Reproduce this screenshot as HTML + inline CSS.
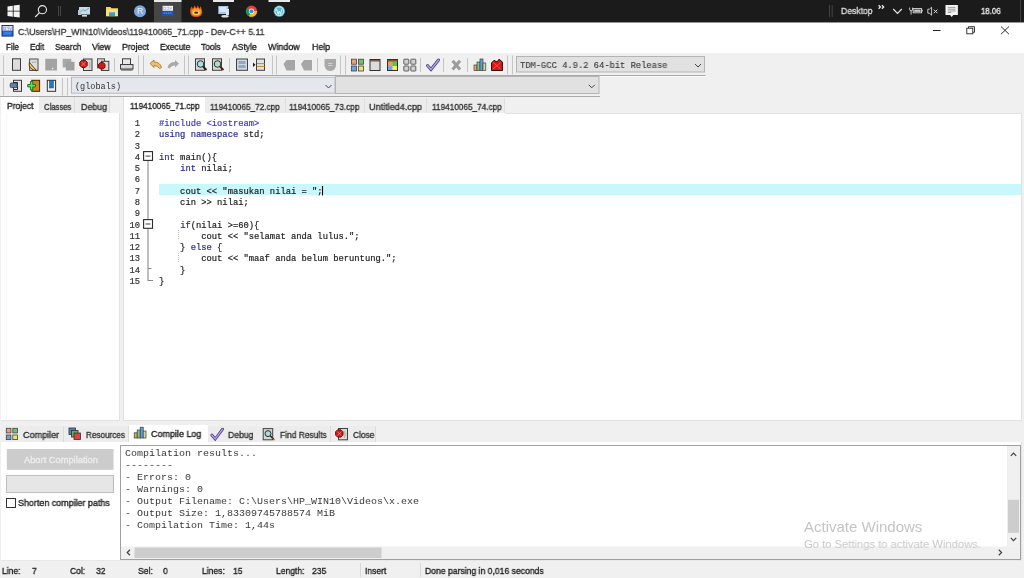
<!DOCTYPE html>
<html><head><meta charset="utf-8">
<style>
*{margin:0;padding:0;box-sizing:border-box}
html,body{width:1024px;height:578px;overflow:hidden;background:#f0f0f0;font-family:"Liberation Sans",sans-serif;color:#000}
.a{position:absolute}
.t{position:absolute;white-space:pre;line-height:1;transform-origin:0 0;will-change:transform}
.mono{font-family:"Liberation Mono",monospace;will-change:transform}
svg{position:absolute;overflow:visible}
</style></head><body>


<!-- TASKBAR -->
<div class="a" style="left:0;top:0;width:1024px;height:22px;background:#1b1b1b"></div>
<!-- taskbar icons -->
<svg style="left:0;top:0" width="1024" height="22">
  <!-- windows logo -->
  <path d="M7.5 6.4 L12.8 5.7 L12.8 10.8 L7.5 10.8 Z M13.6 5.6 L19.7 4.8 L19.7 10.8 L13.6 10.8 Z M7.5 11.6 L12.8 11.6 L12.8 16.7 L7.5 16 Z M13.6 11.6 L19.7 11.6 L19.7 17.5 L13.6 16.8 Z" fill="#f4f4f4"/>
  <!-- search -->
  <circle cx="42.4" cy="9.7" r="4.1" fill="none" stroke="#e8e8e8" stroke-width="1.1"/>
  <path d="M39.5 12.7 L35.2 17" stroke="#e8e8e8" stroke-width="1.2"/>
  <!-- separator -->
  <path d="M58.5 6 V16 M60.5 6 V16" stroke="#4a4a4a" stroke-width="0.9"/>
  <!-- monitor icon -->
  <rect x="79" y="7" width="11" height="7.5" fill="#c9dce6" rx="0.5"/>
  <path d="M80 12.5 L83 9.5 L85 11 L89 8" stroke="#6aa8c0" stroke-width="1" fill="none"/>
  <rect x="78" y="10" width="3" height="5" fill="#b8c6d0"/>
  <rect x="82" y="15" width="5" height="1.6" fill="#d8d8d8"/>
  <!-- folder -->
  <path d="M106 7 h4.5 l1 1.2 h6.5 v8 h-12 z" fill="#f2d06b"/>
  <rect x="106" y="9.5" width="12" height="6.6" fill="#f8de86"/>
  <rect x="109" y="12.3" width="6" height="3.8" fill="#3a9fc8"/>
  <!-- R -->
  <circle cx="140" cy="11.2" r="6" fill="#7aa8dc"/>
  <text x="140" y="14.3" font-size="8.5" font-family="Liberation Sans" fill="#e8f0fa" text-anchor="middle">R</text>
  <!-- active button -->
  <rect x="154" y="0" width="27.5" height="22" fill="#454545"/>
  <rect x="154" y="0" width="27.5" height="2" fill="#e8e8e8"/>
  <rect x="213" y="0" width="21" height="2" fill="#e8e8e8"/>
  <rect x="268.5" y="0" width="21.5" height="2" fill="#e8e8e8"/>
  <!-- dev icon -->
  <rect x="162" y="10.6" width="11.6" height="5.4" fill="#1d52b4"/>
  <rect x="162.6" y="5.8" width="10.4" height="5" fill="#f2f4fa"/>
  <path d="M163.6 7.2 h2 v2.4 h-2 z M166.8 7.2 h2 v2.4 h-2 M169.8 7.2 l1 2.4 l1 -2.4" stroke="#9aa8c8" stroke-width="0.6" fill="none"/>
  <path d="M163.5 13.2 h8.6" stroke="#5a90e8" stroke-width="1.2" stroke-dasharray="1.5 0.6"/>
  <!-- orange hand -->
  <path d="M190.2 9.5 L191.5 6.5 L193.2 8.8 L194.4 5.2 L196.3 8.3 L197.8 5.2 L199.2 8.6 L200.8 6.2 L201.8 9.5 L202.3 12.5 Q201.5 17 196.2 17 Q190.8 17 190.2 12.5 Z" fill="#e2521a"/>
  <path d="M191.5 10 L193.2 9.5 L194.4 7.5 L196.3 9.3 L197.8 7.5 L199.2 9.5 L200.8 9 L201 12.5 Q200.5 15.8 196.2 15.8 Q191.8 15.8 191.5 12.5 Z" fill="#f4a030"/>
  <ellipse cx="196.2" cy="12.7" rx="3.3" ry="2.1" fill="#f8d858"/>
  <ellipse cx="196.2" cy="12.7" rx="2" ry="1.1" fill="#5a1a08"/>
  <!-- monitor2 -->
  <rect x="218.3" y="6" width="10" height="8" fill="#a8c8f0"/>
  <rect x="219.3" y="7" width="7" height="5" fill="#d8e8fa"/>
  <rect x="226" y="9" width="3" height="6" fill="#dde4ec"/>
  <ellipse cx="225" cy="16.2" rx="3.8" ry="1.3" fill="#e0e0e0"/>
  <!-- chrome -->
  <circle cx="251.5" cy="11.2" r="5.6" fill="#db4437"/>
  <path d="M251.5 11.2 L246.6 8.4 A5.6 5.6 0 0 0 249 16.2 Z" fill="#0f9d58"/>
  <path d="M251.5 11.2 L249 16.2 A5.6 5.6 0 0 0 257.1 11 Z" fill="#f4c20d"/>
  <circle cx="251.5" cy="11.2" r="2.6" fill="#fff"/>
  <circle cx="251.5" cy="11.2" r="2" fill="#4285f4"/>
  <!-- wordpress -->
  <circle cx="279.3" cy="11.2" r="5.6" fill="#5cb8d0"/>
  <circle cx="279.3" cy="11.2" r="4.4" fill="none" stroke="#e6f4f8" stroke-width="0.9"/>
  <path d="M276.5 8.8 L278.2 14.4 L279.3 11 L280.4 14.4 L282.2 8.8" stroke="#e6f4f8" stroke-width="1" fill="none"/>
  <!-- right tray -->
  <path d="M829.5 5 V17 M832.2 5 V17" stroke="#555" stroke-width="0.7"/>
  <path d="M878.6 5.2 l1.8 1.8 l-1.8 1.8 M881.9 5.2 l1.8 1.8 l-1.8 1.8" stroke="#e8e8e8" stroke-width="1.3" fill="none"/>
  <path d="M893.2 9 L897.5 13.5 L901.8 9" stroke="#e8e8e8" stroke-width="1.1" fill="none"/>
  <path d="M909.6 7.6 v1.6 q0 1.6 1.5 1.6 q1.5 0 1.5 -1.6 v-1.6 M911.1 10.8 v3.8" stroke="#e0e0e0" stroke-width="0.9" fill="none"/>
  <rect x="913.2" y="8.6" width="8.4" height="4.2" fill="none" stroke="#e0e0e0" stroke-width="0.9"/>
  <rect x="914.2" y="9.6" width="6.4" height="2.3" fill="#c8c8c8"/>
  <rect x="921.8" y="9.8" width="0.8" height="1.8" fill="#e0e0e0"/>
  <path d="M927.8 9.2 h1.6 l2.2 -2 v8 l-2.2 -2 h-1.6 z" stroke="#d8d8d8" stroke-width="0.9" fill="none"/>
  <path d="M933.8 9.6 l3.6 3.6 M937.4 9.6 l-3.6 3.6" stroke="#e0e0e0" stroke-width="1"/>
  <path d="M945.5 4.9 h12.4 v10.1 h-4.6 l-1.6 2 l-1.6 -2 h-4.6 z" fill="#f4f4f4"/>
  <path d="M947.8 7.4 h7.8 M947.8 9.2 h7.8 M947.8 11 h7.8 M947.8 12.5 h3.5" stroke="#8a8a8a" stroke-width="0.8"/>
  <path d="M1020.5 0 V22" stroke="#4a4a4a" stroke-width="0.8"/>
</svg>

<!-- TITLE + MENU -->
<div class="a" style="left:0;top:22px;width:1024px;height:31px;background:#fff"></div>
<div class="a" style="left:0;top:22px;width:1024px;height:1px;background:#959595"></div>

<!-- title icon + window controls -->
<svg style="left:0;top:0" width="1024" height="60">
  <rect x="1.5" y="25" width="12" height="11.6" fill="#14306e"/>
  <rect x="2.5" y="26" width="10" height="4.8" fill="#dfe4f4"/>
  <path d="M3.5 27.3 h2 v2.5 h-2 z M6.5 27.3 h2.2 v2.5 M9.5 27.3 l1 2.5 l1 -2.5" stroke="#8090c0" stroke-width="0.6" fill="none"/>
  <rect x="2.5" y="30.8" width="10" height="5" fill="#1f66d8"/>
  <rect x="3.5" y="32" width="8" height="2.6" fill="#3a80e8"/>
  <path d="M933 30.5 h7.5" stroke="#222" stroke-width="1"/>
  <rect x="966.8" y="28.2" width="6" height="5.6" fill="none" stroke="#222" stroke-width="0.9"/>
  <path d="M968.5 28 v-1.3 h6 v5.6 h-1.6" stroke="#222" stroke-width="0.9" fill="none"/>
  <path d="M1001 26.5 L1009 34.2 M1009 26.5 L1001 34.2" stroke="#222" stroke-width="0.95"/>
</svg>
<!-- TOOLBARS -->
<svg style="left:0;top:0" width="1024" height="100">
  <!-- band lines -->
  <path d="M0 75.5 H705.5" stroke="#a8a8a8" stroke-width="1"/>
  <path d="M0 76.5 H705.5" stroke="#fcfcfc" stroke-width="1"/>
  <path d="M0 96.5 H600" stroke="#a8a8a8" stroke-width="1"/>
  <!-- grips / separators row1 -->
  <g stroke="#c4c4c4" stroke-width="1">
    <path d="M3.5 55.5 V74.5"/><path d="M114.5 58 V72"/><path d="M138.5 55.5 V74.5"/><path d="M143.5 55.5 V74.5"/>
    <path d="M184.5 55.5 V74.5"/><path d="M188.5 55.5 V74.5"/><path d="M229.5 58 V72"/><path d="M272.5 55.5 V74.5"/><path d="M276.5 55.5 V74.5"/>
    <path d="M317.5 58 V72"/><path d="M340.5 55.5 V74.5"/><path d="M345.5 55.5 V74.5"/><path d="M420.5 58 V72"/><path d="M443.5 58 V72"/><path d="M467.5 58 V72"/>
    <path d="M507.5 55.5 V74.5"/><path d="M512.5 55.5 V74.5"/>
    <path d="M3.5 78 V95.5"/><path d="M62.5 78 V95.5"/><path d="M67.5 78 V95.5"/>
  </g>
  <!-- New -->
  <rect x="12.5" y="58.8" width="8" height="11.5" fill="#dcdcdc" stroke="#3c3c3c" stroke-width="1"/>
  <!-- Open -->
  <rect x="29.6" y="59" width="8.4" height="11.4" fill="#dedede" stroke="#4a4a4a" stroke-width="1"/>
  <path d="M32 61.5 l0.8 1.5 l0.8 -1.5 M34.5 61.5 l0.8 1.5 l0.8 -1.5" stroke="#909090" stroke-width="0.6" fill="none"/>
  <path d="M29.3 62.3 Q27.8 69.2 36.8 70.9 Z" fill="#f2c66a" stroke="#4a3410" stroke-width="0.9"/>
  <!-- Save (gray) -->
  <rect x="45.3" y="58.8" width="11.7" height="11.7" fill="#a2a2a2"/><circle cx="52.6" cy="68.6" r="0.8" fill="#f0f0f0"/>
  <!-- Save all gray -->
  <rect x="62.7" y="58.8" width="8.6" height="8.6" fill="#a8a8a8"/>
  <rect x="65.8" y="61.8" width="8.7" height="8.7" fill="#a0a0a0"/>
  <!-- Close -->
  <rect x="83.5" y="59" width="8.5" height="11.5" fill="#d8dcd8" stroke="#404040" stroke-width="1"/>
  <path d="M89.5 61.5 v7 M90.8 63 v4" stroke="#a0a8a0" stroke-width="0.6"/>
  <path d="M81.8 60.2 L85.2 60.2 L87.2 62.2 L87.2 65.5 L85.2 67.5 L81.8 67.5 L79.8 65.5 L79.8 62.2 Z" fill="#d41818" stroke="#5a0c0c" stroke-width="0.9"/>
  <path d="M81.5 62 L85.5 66 M85.5 62 L81.5 66" stroke="#ff9a9a" stroke-width="0.7"/>
  <!-- Close all -->
  <rect x="97.5" y="58.8" width="7" height="9" fill="#d8dcd8" stroke="#505050" stroke-width="1"/>
  <rect x="101.5" y="61.3" width="7.3" height="9.2" fill="#d8dcd8" stroke="#404040" stroke-width="1"/>
  <path d="M100.3 62.6 L103.3 62.6 L105 64.3 L105 67.3 L103.3 69 L100.3 69 L98.6 67.3 L98.6 64.3 Z" fill="#d41818" stroke="#5a0c0c" stroke-width="0.9"/>
  <!-- Print -->
  <rect x="122.5" y="58.8" width="8" height="6" fill="#e8e8e8" stroke="#404040" stroke-width="1"/>
  <rect x="120.5" y="64.5" width="12.5" height="4.5" fill="#d8d8d8" stroke="#404040" stroke-width="1"/>
  <path d="M121 70 h11.5" stroke="#404040" stroke-width="1"/>
  <!-- Undo -->
  <path d="M150 63.5 L154 60 L154 62 Q160 62 161.5 67.5 L159.5 68.5 Q157.5 65.5 154 65.5 L154 67.5 Z" fill="#f0c070" stroke="#a07020" stroke-width="0.8"/>
  <!-- Redo gray -->
  <path d="M179 63.5 L175 60 L175 62 Q169 62 167.5 67.5 L169.5 68.5 Q171.5 65.5 175 65.5 L175 67.5 Z" fill="#a8a8a8"/>
  <!-- Find -->
  <rect x="195.5" y="58.8" width="9" height="11.5" fill="#d8d8d8" stroke="#404040" stroke-width="1"/>
  <circle cx="200.5" cy="64" r="3.3" fill="#a8e0e0" stroke="#303030" stroke-width="1"/>
  <path d="M203 66.5 L206.5 70" stroke="#202020" stroke-width="1.8"/>
  <!-- Replace -->
  <rect x="212.5" y="58.8" width="9" height="11.5" fill="#d8d8d8" stroke="#404040" stroke-width="1"/>
  <circle cx="217.5" cy="64" r="3.3" fill="#a8e0c0" stroke="#303030" stroke-width="1"/>
  <path d="M220 66.5 L223.5 70" stroke="#502020" stroke-width="1.8"/>
  <!-- Goto -->
  <rect x="236.5" y="59" width="11" height="11.3" fill="#d0d8e0" stroke="#404040" stroke-width="1"/>
  <rect x="238.5" y="61" width="7" height="3" fill="#90a8c8"/><rect x="238.5" y="65" width="7" height="3" fill="#90a8c8"/>
  <!-- bookmark -->
  <rect x="256.5" y="59" width="8" height="11.3" fill="#e0e0e0" stroke="#404040" stroke-width="1"/>
  <path d="M257 63.6 h7.5 M257 66.4 h7.5" stroke="#c88a18" stroke-width="1"/>
  <path d="M253 62.5 L255.5 64.8 L253 67 Z" fill="#202020"/>
  <!-- indent gray -->
  <path d="M283.5 64 L286.5 60 H295 V70.5 H286.5 Z" fill="#a6a6a6"/>
  <path d="M301 64 L304 60 H312 V70.5 H304 Z" fill="#a6a6a6"/>
  <!-- shield -->
  <path d="M324.5 59 H336 V65 Q336 70.5 330.3 71 Q324.5 70.5 324.5 65 Z" fill="#a8a8a8"/>
  <path d="M328 63.5 h4.5 M328 65.5 h4.5" stroke="#d8d8d8" stroke-width="0.8"/>
  <!-- grid colored -->
  <rect x="351.5" y="59.2" width="5" height="5" fill="#f0a070" stroke="#404040" stroke-width="0.8"/>
  <rect x="358.5" y="59.2" width="5" height="5" fill="#70c070" stroke="#404040" stroke-width="0.8"/>
  <rect x="351.5" y="66" width="5" height="5" fill="#70a0e0" stroke="#404040" stroke-width="0.8"/>
  <rect x="358.5" y="66" width="5" height="5" fill="#e8e870" stroke="#404040" stroke-width="0.8"/>
  <!-- window -->
  <rect x="370" y="59.5" width="10" height="11" fill="#dcdcdc" stroke="#303030" stroke-width="1"/>
  <path d="M370 60.8 h10" stroke="#6a4a30" stroke-width="1.3"/>
  <!-- colored window -->
  <rect x="387.5" y="59.5" width="10" height="11" fill="#e8a060" stroke="#303030" stroke-width="1"/>
  <rect x="392.5" y="62" width="4.5" height="4" fill="#60c050"/><rect x="388" y="66" width="4.5" height="4" fill="#70a8e8"/><rect x="392.5" y="66" width="4.5" height="4" fill="#f0f060"/>
  <path d="M387.5 60.8 h10" stroke="#6a4a30" stroke-width="1.3"/>
  <!-- gray grid -->
  <rect x="403.8" y="59.2" width="5" height="5" fill="#d0d0d0" stroke="#505050" stroke-width="0.9" rx="0.6"/>
  <rect x="410.8" y="59.2" width="5" height="5" fill="#d0d0d0" stroke="#505050" stroke-width="0.9" rx="0.6"/>
  <rect x="403.8" y="66" width="5" height="5" fill="#d0d0d0" stroke="#505050" stroke-width="0.9" rx="0.6"/>
  <rect x="410.8" y="66" width="5" height="5" fill="#d0d0d0" stroke="#505050" stroke-width="0.9" rx="0.6"/>
  <!-- check -->
  <path d="M427.5 65.5 L431 69.5 L438.5 60" stroke="#4a3a80" stroke-width="2.9" fill="none" stroke-linecap="round"/>
  <path d="M427.5 65.5 L431 69.5 L438.5 60" stroke="#b4a4ec" stroke-width="1.4" fill="none" stroke-linecap="round"/>
  <!-- X gray -->
  <path d="M452.6 60.8 L460 69.4 M460 60.8 L452.6 69.4" stroke="#9c9c9c" stroke-width="3"/>
  <!-- chart -->
  <rect x="474" y="65" width="3" height="5.5" fill="#e8a860" stroke="#404040" stroke-width="0.7"/>
  <rect x="477" y="62" width="3" height="8.5" fill="#80c880" stroke="#404040" stroke-width="0.7"/>
  <rect x="480" y="59" width="3" height="11.5" fill="#60a0e0" stroke="#404040" stroke-width="0.7"/>
  <rect x="483" y="63" width="2.8" height="7.5" fill="#c8e090" stroke="#404040" stroke-width="0.7"/>
  <!-- red -->
  <path d="M491.5 63 L494 60.3 L497 62 L499 59.2 L502.5 62 V70.5 H491.5 Z" fill="#d81818" stroke="#3a0808" stroke-width="1"/>
  <path d="M493 62.5 L500.5 69 M500.5 62.5 L493 69" stroke="#ff5050" stroke-width="1"/>
  <!-- compiler combo -->
  <rect x="516.5" y="56.5" width="188" height="15.5" fill="#e1e1e1" stroke="#b4b4b4" stroke-width="1"/>
  <path d="M695 64 L698 67 L701 64" stroke="#444" stroke-width="1" fill="none"/>
  <!-- row2 icons -->
  <rect x="13.5" y="80.3" width="8" height="11" fill="#e4e4e4" stroke="#3a3a3a" stroke-width="1"/>
  <path d="M13.5 82.5 h4 v7 h-4" stroke="#2a2a2a" stroke-width="1" fill="none"/>
  <rect x="10.2" y="83" width="7" height="4.6" fill="#6a80a0" stroke="#2a3850" stroke-width="0.8" rx="1.2"/>
  <rect x="31.8" y="80.3" width="7.8" height="11" fill="#c88a1c" stroke="#3a2400" stroke-width="1"/>
  <path d="M30.4 81.5 h2.4 v3 h2.7 v2.4 h-2.7 v3 h-2.4 v-3 h-2.7 v-2.4 h2.7 z" fill="#60e060" stroke="#127012" stroke-width="0.9" stroke-linejoin="round"/>
  <rect x="47.3" y="80.3" width="8.3" height="11" fill="#f4f4f4" stroke="#3a3020" stroke-width="1"/>
  <rect x="49.5" y="80.6" width="3.9" height="7.4" fill="#1f7ac8" stroke="#104070" stroke-width="0.5"/>
  <!-- combos row2 -->
  <rect x="71.5" y="77.2" width="263.5" height="16" fill="#e4e8ee" stroke="#b4b8bc" stroke-width="1"/>
  <path d="M325.5 85 L328.5 88 L331.5 85" stroke="#444" stroke-width="1" fill="none"/>
  <rect x="335.5" y="76.5" width="263.5" height="17" fill="#e1e1e1" stroke="#b4b4b4" stroke-width="1"/>
  <path d="M588.8 84.8 L591.8 87.8 L594.8 84.8" stroke="#444" stroke-width="1" fill="none"/>
</svg>
<!-- LEFT PANEL -->
<div class="a" style="left:1px;top:113.3px;width:119px;height:307.5px;background:#fff;border-right:1px solid #e2e2e2;border-bottom:1px solid #e2e2e2"></div>
<div class="a" style="left:6px;top:113.5px;width:1px;height:306px;background:#f7f7f7"></div>
<div class="a" style="left:39.1px;top:97.4px;width:36.1px;height:16px;background:#ececec;border-right:1px solid #dedede"></div>
<div class="a" style="left:75.2px;top:97.4px;width:35px;height:16px;background:#ececec;border-right:1px solid #dedede"></div>
<div class="a" style="left:1px;top:97.2px;width:38.1px;height:17px;background:#fff"></div>

<!-- EDITOR -->
<div class="a" style="left:123px;top:113.3px;width:898.6px;height:307.5px;background:#fff;border:1px solid #e0e0e0;border-top:none"></div>
<div class="a" style="left:205.2px;top:97.6px;width:80.4px;height:15.8px;background:#ececec;border-right:1px solid #e0e0e0"></div>
<div class="a" style="left:285.6px;top:97.6px;width:79.4px;height:15.8px;background:#ececec;border-right:1px solid #e0e0e0"></div>
<div class="a" style="left:365px;top:97.6px;width:62.1px;height:15.8px;background:#ececec;border-right:1px solid #e0e0e0"></div>
<div class="a" style="left:427.1px;top:97.6px;width:78px;height:15.8px;background:#ececec;border-right:1px solid #e0e0e0"></div>
<div class="a" style="left:123px;top:97.2px;width:82.2px;height:17px;background:#fff;border-left:1px solid #e0e0e0"></div>
<div class="a" style="left:505px;top:113.3px;width:516.6px;height:1px;background:#e0e0e0"></div>

<!-- highlighted line -->
<div class="a" style="left:158.5px;top:184.2px;width:862px;height:11px;background:#c8f8fc"></div>
<!-- code -->
<div class="a mono" style="left:120px;top:119px;width:20px;font-size:8.8px;line-height:11.28px;text-align:right;color:#333;-webkit-text-stroke:0.2px #333;white-space:pre">1
2
3
4
5
6
7
8
9
10
11
12
13
14
15</div>
<div class="a mono" style="left:159px;top:119px;font-size:8.8px;line-height:11.28px;color:#222;-webkit-text-stroke:0.2px currentColor;white-space:pre"><span style="color:#3a3ac8">#include &lt;iostream&gt;</span>
<span style="color:#2a2a90">using namespace</span> std;

<span style="color:#2a2a90">int</span> main(){
    <span style="color:#2a2a90">int</span> nilai;

    cout &lt;&lt; "masukan nilai = ";
    cin &gt;&gt; nilai;

    <span style="color:#2a2a90">if</span>(nilai &gt;=60){
        cout &lt;&lt; "selamat anda lulus.";
    } <span style="color:#2a2a90">else</span> {
        cout &lt;&lt; "maaf anda belum beruntung.";
    }
}</div>
<svg style="left:0;top:0" width="1024" height="300">
  <path d="M148 160.5 V219.3 M148 228.5 V280.5 H153 M148 268.5 H151.5" stroke="#8a8a8a" stroke-width="1.1" fill="none"/>
  <rect x="143.6" y="151.6" width="8.9" height="8.8" fill="#fff" stroke="#2a2a2a" stroke-width="1.1"/>
  <path d="M145.5 156.1 h5" stroke="#555" stroke-width="1.1"/>
  <rect x="143.6" y="219.6" width="8.9" height="8.7" fill="#fff" stroke="#2a2a2a" stroke-width="1.1"/>
  <path d="M145.5 224 h5" stroke="#555" stroke-width="1.1"/>
  <path d="M178.5 230 V240 M178.5 253 V263" stroke="#c0c0c0" stroke-width="1" stroke-dasharray="1 1"/>
  <path d="M322.5 186 V195.5" stroke="#000" stroke-width="1.1"/>
</svg>
<!-- BOTTOM PANEL -->
<div class="a" style="left:1px;top:442px;width:1021px;height:119px;background:#fff;border-right:1px solid #e2e2e2;border-bottom:1px solid #e6e6e6"></div>
<div class="a" style="left:5px;top:426.4px;width:58.5px;height:15.6px;background:#ececec;border-right:1px solid #dcdcdc"></div>
<div class="a" style="left:63.5px;top:426.4px;width:65px;height:15.6px;background:#ececec;border-right:1px solid #dcdcdc"></div>
<div class="a" style="left:207.5px;top:426.4px;width:51px;height:15.6px;background:#ececec;border-right:1px solid #dcdcdc"></div>
<div class="a" style="left:258.3px;top:426.4px;width:73px;height:15.6px;background:#ececec;border-right:1px solid #dcdcdc"></div>
<div class="a" style="left:331.2px;top:426.4px;width:45.1px;height:15.6px;background:#ececec;border-right:1px solid #dcdcdc"></div>
<div class="a" style="left:128.6px;top:425.2px;width:79px;height:17px;background:#fff"></div>
<svg style="left:0;top:0" width="1024" height="578">
  <!-- compiler grid icon -->
  <rect x="6.3" y="428.3" width="4.6" height="4.6" fill="#f0a070" stroke="#404040" stroke-width="0.8"/>
  <rect x="12.8" y="428.3" width="4.6" height="4.6" fill="#70c070" stroke="#404040" stroke-width="0.8"/>
  <rect x="6.3" y="435" width="4.6" height="4.6" fill="#70a0e0" stroke="#404040" stroke-width="0.8"/>
  <rect x="12.8" y="435" width="4.6" height="4.6" fill="#e8e870" stroke="#404040" stroke-width="0.8"/>
  <!-- resources icon -->
  <rect x="69" y="428" width="6.5" height="6.5" fill="#5080c0" stroke="#303030" stroke-width="0.8"/>
  <rect x="71.5" y="430.5" width="6.5" height="6.5" fill="#60b060" stroke="#303030" stroke-width="0.8"/>
  <rect x="74" y="433" width="6.5" height="6.5" fill="#e04040" stroke="#303030" stroke-width="0.8"/>
  <!-- compile log chart -->
  <rect x="134.2" y="432.8" width="3" height="5.2" fill="#e8a860" stroke="#3a3a3a" stroke-width="0.7"/>
  <rect x="137.2" y="430" width="3" height="8" fill="#80c880" stroke="#3a3a3a" stroke-width="0.7"/>
  <rect x="140.2" y="427.2" width="3" height="10.8" fill="#60a0e0" stroke="#3a3a3a" stroke-width="0.7"/>
  <rect x="143.2" y="431" width="2.8" height="7" fill="#c8e090" stroke="#3a3a3a" stroke-width="0.7"/>
  <!-- debug check -->
  <path d="M211.8 435 L215.2 439 L222.6 429.2" stroke="#4a3a80" stroke-width="2.8" fill="none" stroke-linecap="round"/>
  <path d="M211.8 435 L215.2 439 L222.6 429.2" stroke="#b4a4ec" stroke-width="1.3" fill="none" stroke-linecap="round"/>
  <!-- find results -->
  <rect x="263.2" y="428.6" width="9.5" height="11.2" fill="#d8d8d8" stroke="#404040" stroke-width="1"/>
  <circle cx="268" cy="433.6" r="3" fill="#a8dce0" stroke="#2a2a2a" stroke-width="1"/>
  <path d="M270.2 435.8 L274.2 439.8" stroke="#2a2a2a" stroke-width="1.6"/>
  <path d="M272.5 438.5 L274.8 440.3" stroke="#c09030" stroke-width="0.8"/>
  <!-- close -->
  <rect x="338.5" y="428.5" width="9" height="11.3" fill="#d8dcd8" stroke="#404040" stroke-width="1"/>
  <path d="M344.5 431 v7 M345.8 432.5 v4" stroke="#a0a8a0" stroke-width="0.6"/>
  <path d="M337.6 429.8 L341 429.8 L343 431.8 L343 435.1 L341 437.1 L337.6 437.1 L335.6 435.1 L335.6 431.8 Z" fill="#d41818" stroke="#5a0c0c" stroke-width="0.9"/>
  <path d="M337.3 431.6 L341.3 435.6 M341.3 431.6 L337.3 435.6" stroke="#ff9a9a" stroke-width="0.7"/>
  <!-- left controls -->
  <rect x="6.8" y="449" width="106.7" height="20.8" fill="#cccccc"/>
  <rect x="6.5" y="475.5" width="107" height="17" fill="#e6e6e6" stroke="#bcbcbc" stroke-width="1"/>
  <rect x="6.5" y="498.5" width="9" height="9" fill="#fff" stroke="#333" stroke-width="1"/>
  <!-- output box -->
  <rect x="120.5" y="445.5" width="900" height="114" fill="#fff" stroke="#a0a0a0" stroke-width="1"/>
  <!-- v scrollbar -->
  <rect x="1007" y="446" width="13" height="100.5" fill="#f0f0f0"/>
  <rect x="1008" y="499.8" width="11" height="33" fill="#cdcdcd"/>
  <path d="M1010.8 455.8 L1013.5 453 L1016.2 455.8" stroke="#404040" stroke-width="1.2" fill="none"/>
  <path d="M1010.8 537.8 L1013.5 540.6 L1016.2 537.8" stroke="#404040" stroke-width="1.2" fill="none"/>
  <!-- h scrollbar -->
  <rect x="121" y="546.5" width="899" height="12.5" fill="#f0f0f0"/>
  <rect x="134.5" y="547.5" width="247" height="10.5" fill="#cdcdcd"/>
  <path d="M130 549.8 L127.2 552.5 L130 555.2" stroke="#404040" stroke-width="1.2" fill="none"/>
  <path d="M998.8 549.8 L1001.6 552.5 L998.8 555.2" stroke="#404040" stroke-width="1.2" fill="none"/>
  <!-- status separators -->
  <path d="M360.5 563 V577 M420.5 563 V577" stroke="#d8d8d8" stroke-width="1"/>
</svg>
<div class="a mono" style="left:124.5px;top:447.5px;font-size:9px;line-height:12.05px;color:#383838;transform:scaleX(1.1111);transform-origin:0 0;white-space:pre">Compilation results...
--------
- Errors: 0
- Warnings: 0
- Output Filename: C:\Users\HP_WIN10\Videos\x.exe
- Output Size: 1,83309745788574 MiB
- Compilation Time: 1,44s</div>

<!-- STATUS BAR -->
<div class="t" style="left:840.50px;top:7.00px;font-size:9.2px;color:#d8d8d8;font-family:'Liberation Sans';font-weight:normal;transform:scaleX(0.9377);-webkit-text-stroke:0.35px currentColor;">Desktop</div>
<div class="t" style="left:981.40px;top:7.00px;font-size:9.2px;color:#e8e8e8;font-family:'Liberation Sans';font-weight:normal;transform:scaleX(0.8522);-webkit-text-stroke:0.35px currentColor;">18.06</div>
<div class="t" style="left:17.60px;top:28.00px;font-size:9.3px;color:#3a3a3a;font-family:'Liberation Sans';font-weight:normal;transform:scaleX(0.9373);-webkit-text-stroke:0.35px currentColor;">C:\Users\HP_WIN10\Videos\119410065_71.cpp - Dev-C++ 5.11</div>
<div class="t" style="left:5.80px;top:43.00px;font-size:9.3px;color:#1a1a1a;font-family:'Liberation Sans';font-weight:normal;transform:scaleX(0.8643);-webkit-text-stroke:0.35px currentColor;">File</div>
<div class="t" style="left:29.90px;top:43.00px;font-size:9.3px;color:#1a1a1a;font-family:'Liberation Sans';font-weight:normal;transform:scaleX(0.8882);-webkit-text-stroke:0.35px currentColor;">Edit</div>
<div class="t" style="left:55.10px;top:43.00px;font-size:9.3px;color:#1a1a1a;font-family:'Liberation Sans';font-weight:normal;transform:scaleX(0.8980);-webkit-text-stroke:0.35px currentColor;">Search</div>
<div class="t" style="left:92.20px;top:43.00px;font-size:9.3px;color:#1a1a1a;font-family:'Liberation Sans';font-weight:normal;transform:scaleX(0.9275);-webkit-text-stroke:0.35px currentColor;">View</div>
<div class="t" style="left:121.60px;top:43.00px;font-size:9.3px;color:#1a1a1a;font-family:'Liberation Sans';font-weight:normal;transform:scaleX(0.9335);-webkit-text-stroke:0.35px currentColor;">Project</div>
<div class="t" style="left:159.80px;top:43.00px;font-size:9.3px;color:#1a1a1a;font-family:'Liberation Sans';font-weight:normal;transform:scaleX(0.9006);-webkit-text-stroke:0.35px currentColor;">Execute</div>
<div class="t" style="left:201.20px;top:43.00px;font-size:9.3px;color:#1a1a1a;font-family:'Liberation Sans';font-weight:normal;transform:scaleX(0.9023);-webkit-text-stroke:0.35px currentColor;">Tools</div>
<div class="t" style="left:232.30px;top:43.00px;font-size:9.3px;color:#1a1a1a;font-family:'Liberation Sans';font-weight:normal;transform:scaleX(0.9176);-webkit-text-stroke:0.35px currentColor;">AStyle</div>
<div class="t" style="left:268.00px;top:43.00px;font-size:9.3px;color:#1a1a1a;font-family:'Liberation Sans';font-weight:normal;transform:scaleX(0.9595);-webkit-text-stroke:0.35px currentColor;">Window</div>
<div class="t" style="left:311.50px;top:43.00px;font-size:9.3px;color:#1a1a1a;font-family:'Liberation Sans';font-weight:normal;transform:scaleX(0.9446);-webkit-text-stroke:0.35px currentColor;">Help</div>
<div class="t" style="left:6.60px;top:102.00px;font-size:9.2px;color:#222;font-family:'Liberation Sans';font-weight:normal;transform:scaleX(0.9263);-webkit-text-stroke:0.35px currentColor;">Project</div>
<div class="t" style="left:43.50px;top:103.00px;font-size:9.2px;color:#333;font-family:'Liberation Sans';font-weight:normal;transform:scaleX(0.8343);-webkit-text-stroke:0.35px currentColor;">Classes</div>
<div class="t" style="left:80.70px;top:103.00px;font-size:9.2px;color:#333;font-family:'Liberation Sans';font-weight:normal;transform:scaleX(0.9643);-webkit-text-stroke:0.35px currentColor;">Debug</div>
<div class="t" style="left:130.20px;top:102.00px;font-size:9.3px;color:#222;font-family:'Liberation Sans';font-weight:normal;transform:scaleX(0.8812);-webkit-text-stroke:0.35px currentColor;">119410065_71.cpp</div>
<div class="t" style="left:210.00px;top:103.00px;font-size:9.3px;color:#333;font-family:'Liberation Sans';font-weight:normal;transform:scaleX(0.8837);-webkit-text-stroke:0.35px currentColor;">119410065_72.cpp</div>
<div class="t" style="left:289.40px;top:103.00px;font-size:9.3px;color:#333;font-family:'Liberation Sans';font-weight:normal;transform:scaleX(0.8926);-webkit-text-stroke:0.35px currentColor;">119410065_73.cpp</div>
<div class="t" style="left:369.00px;top:103.00px;font-size:9.3px;color:#333;font-family:'Liberation Sans';font-weight:normal;transform:scaleX(0.9761);-webkit-text-stroke:0.35px currentColor;">Untitled4.cpp</div>
<div class="t" style="left:431.90px;top:103.00px;font-size:9.3px;color:#333;font-family:'Liberation Sans';font-weight:normal;transform:scaleX(0.8837);-webkit-text-stroke:0.35px currentColor;">119410065_74.cpp</div>
<div class="t" style="left:22.90px;top:431.00px;font-size:9.3px;color:#333;font-family:'Liberation Sans';font-weight:normal;transform:scaleX(0.9730);-webkit-text-stroke:0.35px currentColor;">Compiler</div>
<div class="t" style="left:85.70px;top:431.00px;font-size:9.3px;color:#333;font-family:'Liberation Sans';font-weight:normal;transform:scaleX(0.8775);-webkit-text-stroke:0.35px currentColor;">Resources</div>
<div class="t" style="left:151.00px;top:430.00px;font-size:9.3px;color:#222;font-family:'Liberation Sans';font-weight:normal;transform:scaleX(0.9649);-webkit-text-stroke:0.35px currentColor;">Compile Log</div>
<div class="t" style="left:227.80px;top:431.00px;font-size:9.3px;color:#333;font-family:'Liberation Sans';font-weight:normal;transform:scaleX(0.9256);-webkit-text-stroke:0.35px currentColor;">Debug</div>
<div class="t" style="left:279.80px;top:431.00px;font-size:9.3px;color:#333;font-family:'Liberation Sans';font-weight:normal;transform:scaleX(0.9035);-webkit-text-stroke:0.35px currentColor;">Find Results</div>
<div class="t" style="left:352.60px;top:431.00px;font-size:9.3px;color:#333;font-family:'Liberation Sans';font-weight:normal;transform:scaleX(0.8984);-webkit-text-stroke:0.35px currentColor;">Close</div>
<div class="t" style="left:23.90px;top:456.00px;font-size:9.3px;color:#ececec;font-family:'Liberation Sans';font-weight:normal;-webkit-text-stroke:0.35px currentColor;">Abort Compilation</div>
<div class="t" style="left:18.40px;top:499.00px;font-size:9.3px;color:#222;font-family:'Liberation Sans';font-weight:normal;transform:scaleX(0.9598);-webkit-text-stroke:0.35px currentColor;">Shorten compiler paths</div>
<div class="t" style="left:804.00px;top:519.00px;font-size:15.0px;color:#c4c4c4;font-family:'Liberation Sans';font-weight:normal;transform:scaleX(0.9968);;">Activate Windows</div>
<div class="t" style="left:804.00px;top:539.00px;font-size:11.3px;color:#c8c8c8;font-family:'Liberation Sans';font-weight:normal;transform:scaleX(0.9922);;">Go to Settings to activate Windows.</div>
<div class="t" style="left:1.90px;top:566.00px;font-size:9.4px;color:#222;font-family:'Liberation Sans';font-weight:normal;transform:scaleX(0.9100);-webkit-text-stroke:0.35px currentColor;">Line:</div>
<div class="t" style="left:32.00px;top:566.00px;font-size:9.4px;color:#222;font-family:'Liberation Sans';font-weight:normal;transform:scaleX(0.9100);-webkit-text-stroke:0.35px currentColor;">7</div>
<div class="t" style="left:70.40px;top:566.00px;font-size:9.4px;color:#222;font-family:'Liberation Sans';font-weight:normal;transform:scaleX(0.9100);-webkit-text-stroke:0.35px currentColor;">Col:</div>
<div class="t" style="left:95.50px;top:566.00px;font-size:9.4px;color:#222;font-family:'Liberation Sans';font-weight:normal;transform:scaleX(0.9100);-webkit-text-stroke:0.35px currentColor;">32</div>
<div class="t" style="left:138.00px;top:566.00px;font-size:9.4px;color:#222;font-family:'Liberation Sans';font-weight:normal;transform:scaleX(0.9100);-webkit-text-stroke:0.35px currentColor;">Sel:</div>
<div class="t" style="left:163.00px;top:566.00px;font-size:9.4px;color:#222;font-family:'Liberation Sans';font-weight:normal;transform:scaleX(0.9100);-webkit-text-stroke:0.35px currentColor;">0</div>
<div class="t" style="left:201.70px;top:566.00px;font-size:9.4px;color:#222;font-family:'Liberation Sans';font-weight:normal;transform:scaleX(0.9100);-webkit-text-stroke:0.35px currentColor;">Lines:</div>
<div class="t" style="left:233.00px;top:566.00px;font-size:9.4px;color:#222;font-family:'Liberation Sans';font-weight:normal;transform:scaleX(0.9100);-webkit-text-stroke:0.35px currentColor;">15</div>
<div class="t" style="left:275.60px;top:566.00px;font-size:9.4px;color:#222;font-family:'Liberation Sans';font-weight:normal;transform:scaleX(0.9100);-webkit-text-stroke:0.35px currentColor;">Length:</div>
<div class="t" style="left:312.00px;top:566.00px;font-size:9.4px;color:#222;font-family:'Liberation Sans';font-weight:normal;transform:scaleX(0.9100);-webkit-text-stroke:0.35px currentColor;">235</div>
<div class="t" style="left:365.00px;top:566.00px;font-size:9.4px;color:#222;font-family:'Liberation Sans';font-weight:normal;transform:scaleX(0.9100);-webkit-text-stroke:0.35px currentColor;">Insert</div>
<div class="t" style="left:425.00px;top:566.00px;font-size:9.4px;color:#222;font-family:'Liberation Sans';font-weight:normal;transform:scaleX(0.9184);-webkit-text-stroke:0.35px currentColor;">Done parsing in 0,016 seconds</div>
<div class="t" style="left:519.60px;top:62.00px;font-size:9.0px;color:#333;font-family:'Liberation Mono';font-weight:normal;transform:scaleX(0.9753);-webkit-text-stroke:0.1px #333;">TDM-GCC 4.9.2 64-bit Release</div>
<div class="t" style="left:75.06px;top:83.00px;font-size:8.2px;color:#333;font-family:'Liberation Mono';font-weight:normal;transform:scaleX(1.0424);;">(globals)</div>

</body></html>
